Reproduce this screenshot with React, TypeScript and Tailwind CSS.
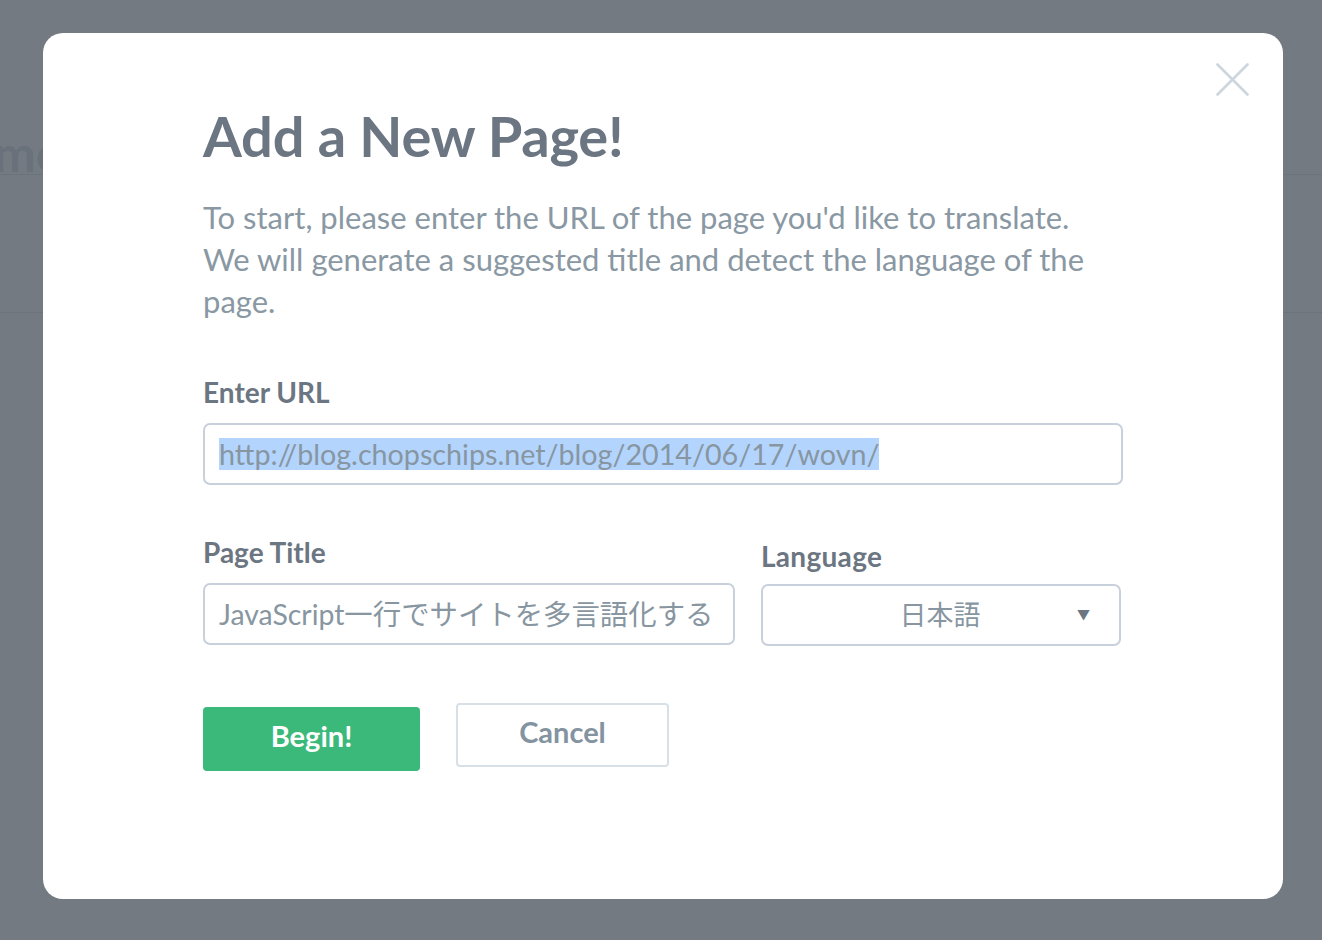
const font = { fontFamily: "Lato, 'Noto Sans CJK JP', sans-serif" };

const App = () => {
  return (
    <div
      className="relative h-[940px] w-full overflow-hidden bg-[#737a82]"
      style={font}
    >
      {/* dimmed page behind the dialog */}
      <div className="flex flex-col">
        <div className="h-[175px] border-b border-[#6c737b] pt-[128px]">
          <div className="ml-[-6px] text-[50px] font-bold leading-[50px] text-[#69717a]">
            mo
          </div>
        </div>
        <div className="h-[138px] border-b border-[#6c737b]" />
      </div>

      <div className="absolute inset-0 flex justify-start pl-[43px] pt-[33px]">
        <div className="relative h-[866px] w-[1240px] rounded-[20px] bg-white pl-[160px] pr-[160px] pt-[75px]">
          <button className="absolute right-[34px] top-[30px] text-[#cdd5dd]">
            <svg width="33" height="33" viewBox="0 0 33 33" fill="none">
              <path
                d="M1.5 1.5L31.5 31.5M31.5 1.5L1.5 31.5"
                stroke="currentColor"
                strokeWidth="2.6"
                strokeLinecap="round"
              />
            </svg>
          </button>

          <h1 className="text-[56px] font-bold leading-[56px] tracking-[-0.2px] text-[#6b7682]">
            Add a New Page!
          </h1>

          <p className="mt-[32px] whitespace-nowrap text-[31px] leading-[42px] text-[#8998a3]">
            To start, please enter the URL of the page you'd like to translate.
            <br />
            We will generate a suggested title and detect the language of the
            <br />
            page.
          </p>

          <div className="mt-[54px] text-[28px] font-bold leading-[32px] text-[#6b7682]">
            Enter URL
          </div>
          <div className="mt-[15px] flex h-[62px] w-[920px] items-center rounded-[7px] border-2 border-[#c8d1db] px-[14px]">
            <span className="bg-[#b3d4fd] text-[28.7px] leading-[32px] text-[#8796a1]">
              http://blog.chopschips.net/blog/2014/06/17/wovn/
            </span>
          </div>

          <div className="mt-[51px] flex gap-[26px]">
            <div className="flex w-[532px] flex-col">
              <div className="text-[28px] font-bold leading-[32px] text-[#6b7682]">
                Page Title
              </div>
              <div className="mt-[15px] flex h-[62px] items-center rounded-[7px] border-2 border-[#c8d1db] pl-[14px] pr-[14px]">
                <div className="overflow-hidden whitespace-nowrap text-[28.4px] leading-[32px] text-[#8796a1]">
                  JavaScript一行でサイトを多言語化する「WOVN.io」を試してみた
                </div>
              </div>
            </div>

            <div className="flex w-[360px] flex-col pt-[4px]">
              <div className="text-[28px] font-bold leading-[32px] tracking-[0.3px] text-[#6b7682]">
                Language
              </div>
              <div className="mt-[12px] flex h-[62px] items-center rounded-[7px] border-2 border-[#c8d1db] pl-[14px] pr-[29px]">
                <span className="flex-1 pl-[26px] text-center text-[27px] leading-[32px] text-[#8796a1]">
                  日本語
                </span>
                <span className="text-[13px] text-[#6b7682]">▼</span>
              </div>
            </div>
          </div>

          <div className="mt-[57px] flex items-start gap-[36px]">
            <button className="mt-[4px] flex h-[64px] w-[217px] items-center justify-center rounded-[4px] bg-[#3bb97b] pb-[6px] text-[29px] font-bold text-white">
              Begin!
            </button>
            <button className="flex h-[64px] w-[213px] items-center justify-center rounded-[4px] border-2 border-[#d8e0e7] pb-[6px] text-[29px] font-bold text-[#8393a0]">
              Cancel
            </button>
          </div>
        </div>
      </div>
    </div>
  );
};

export default App;
